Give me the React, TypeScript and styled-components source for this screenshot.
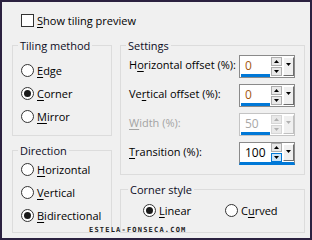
import React from "react";
import styled, { createGlobalStyle } from "styled-components";

const GlobalStyle = createGlobalStyle`
  html, body {
    margin: 0;
    padding: 0;
    background: #f0f0f0;
  }
  body {
    font-family: "Open Sans", "Noto Sans", sans-serif;
    font-size: 11px;
    color: #000;
  }
`;

const Window = styled.div`
  position: relative;
  box-sizing: border-box;
  width: 312px;
  height: 240px;
  border: 2px solid #2b2140;
  background: #f0f0f0;
  padding: 11px 0 0 10px;
`;

const CheckRow = styled.label`
  display: flex;
  align-items: center;
  gap: 3px;
  height: 15px;
  margin-left: 9px;
`;

const CheckBox = styled.span`
  box-sizing: border-box;
  width: 13px;
  height: 13px;
  border: 1px solid #333;
  background: #fff;
`;

const Columns = styled.div`
  display: flex;
  gap: 8px;
  margin-top: 17px;
`;

const Column = styled.div<{ $width: number }>`
  display: flex;
  flex-direction: column;
  gap: 14px;
  width: ${(p) => p.$width}px;
`;

const Group = styled.div<{ $height: number }>`
  box-sizing: border-box;
  height: ${(p) => p.$height}px;
  border: 1px solid #dcdcdc;
`;

const Caption = styled.div<{ $indent?: number }>`
  width: fit-content;
  margin: -8px 0 0 ${(p) => p.$indent ?? 5}px;
  padding: 0 2px;
  line-height: 15px;
  background: #f0f0f0;
  color: #0c0c24;
`;

const RadioList = styled.div<{ $top: number }>`
  display: flex;
  flex-direction: column;
  padding: ${(p) => p.$top}px 0 0 8px;
`;

const RadioRow = styled.label`
  display: flex;
  align-items: center;
  gap: 3px;
  height: 23px;
`;

const RadioCircle = styled.span<{ $on?: boolean }>`
  box-sizing: border-box;
  display: flex;
  align-items: center;
  justify-content: center;
  width: 13px;
  height: 13px;
  border: 1px solid #333;
  border-radius: 50%;
  background: #fff;

  &::after {
    content: "";
    display: ${(p) => (p.$on ? "block" : "none")};
    width: 7px;
    height: 7px;
    border-radius: 50%;
    background: #1a1a1a;
  }
`;

const Key = styled.u`
  text-decoration: underline;
  text-underline-offset: 2px;
`;

const SettingsBody = styled.div`
  display: flex;
  flex-direction: column;
  padding: 2px 9px 0 8px;
`;

const SettingRow = styled.div`
  display: flex;
  justify-content: space-between;
  align-items: flex-start;
  height: 29px;
`;

const SettingLabel = styled.span<{ $disabled?: boolean }>`
  margin-top: 2px;
  line-height: 15px;
  color: ${(p) => (p.$disabled ? "#a3a3a3" : "#000")};
`;

const Spin = styled.div<{ $disabled?: boolean; $focused?: boolean }>`
  box-sizing: border-box;
  display: flex;
  width: 56px;
  height: 23px;
  border: 1px solid ${(p) => (p.$disabled ? "#c4c4c4" : "#8a8a8a")};
  background: #fff;
  border-bottom-width: ${(p) => (p.$focused ? 3 : 1)}px;
  border-bottom-color: ${(p) => (p.$focused ? "#0078d7" : p.$disabled ? "#c4c4c4" : "#8a8a8a")};
`;

const Edit = styled.div<{ $color: string; $focused?: boolean }>`
  box-sizing: border-box;
  display: flex;
  align-items: center;
  width: 30px;
  margin: 0 1px;
  padding-left: 4px;
  color: ${(p) => p.$color};
  font-size: 12px;
  border-bottom: ${(p) => (p.$focused ? "0" : "3px solid #0078d7")};
`;

const Spinner = styled.div`
  display: flex;
  flex-direction: column;
  justify-content: center;
  gap: 1px;
  width: 11px;
  margin-right: 1px;
`;

const SpinButton = styled.div<{ $disabled?: boolean; $hot?: boolean }>`
  box-sizing: border-box;
  display: flex;
  align-items: center;
  justify-content: center;
  height: 9px;
  border: 1px solid ${(p) => (p.$hot ? "#0078d7" : p.$disabled ? "#d6d6d6" : "#adadad")};
  background: ${(p) => (p.$hot ? "#cce4f7" : "#e9e9e9")};
`;

const DropButton = styled.div<{ $disabled?: boolean }>`
  box-sizing: border-box;
  display: flex;
  justify-content: center;
  padding-top: 5px;
  width: 11px;
  margin: 1px 0;
  background: #f0f0f0;
  border-top: 1px solid #fff;
  border-left: 1px solid #fff;
  border-right: 1px solid ${(p) => (p.$disabled ? "#c0c0c0" : "#6d6d6d")};
  border-bottom: 1px solid ${(p) => (p.$disabled ? "#c0c0c0" : "#6d6d6d")};
`;

const CornerOptions = styled.div`
  display: grid;
  grid-template-columns: 82px auto;
  padding: 2px 0 0 22px;
`;

const Watermark = styled.div`
  position: absolute;
  left: 87px;
  top: 224px;
  font-family: "DejaVu Sans Mono", monospace;
  font-weight: bold;
  font-size: 7px;
  letter-spacing: 1.2px;
  color: #1e1e1e;
`;

const Arrow = ({ dir, color }: { dir: "up" | "down"; color: string }) => (
  <svg width="5" height="3" viewBox="0 0 5 3">
    <polygon points={dir === "up" ? "2.5,0 5,3 0,3" : "0,0 5,0 2.5,3"} fill={color} />
  </svg>
);

type SettingProps = {
  label: React.ReactNode;
  value: string;
  color: string;
  disabled?: boolean;
  focused?: boolean;
};

const Setting = ({ label, value, color, disabled, focused }: SettingProps) => {
  const ink = disabled ? "#b0b0b0" : "#000";
  return (
    <SettingRow>
      <SettingLabel $disabled={disabled}>{label}</SettingLabel>
      <Spin $disabled={disabled} $focused={focused}>
        <Edit $color={color} $focused={focused}>
          {value}
        </Edit>
        <Spinner>
          <SpinButton $disabled={disabled}>
            <Arrow dir="up" color={ink} />
          </SpinButton>
          <SpinButton $disabled={disabled} $hot={focused}>
            <Arrow dir="down" color={ink} />
          </SpinButton>
        </Spinner>
        <DropButton $disabled={disabled}>
          <Arrow dir="down" color={ink} />
        </DropButton>
      </Spin>
    </SettingRow>
  );
};

const Radio = ({ on, children }: { on?: boolean; children: React.ReactNode }) => (
  <RadioRow>
    <RadioCircle $on={on} />
    <span>{children}</span>
  </RadioRow>
);

const App = () => {
  return (
    <>
      <GlobalStyle />
      <Window>
        <CheckRow>
          <CheckBox />
          <span>
            <Key>S</Key>how tiling preview
          </span>
        </CheckRow>
        <Columns>
          <Column $width={100}>
            <Group $height={91}>
              <Caption>Tiling method</Caption>
              <RadioList $top={6}>
                <Radio>
                  <Key>E</Key>dge
                </Radio>
                <Radio on>
                  <Key>C</Key>orner
                </Radio>
                <Radio>
                  <Key>M</Key>irror
                </Radio>
              </RadioList>
            </Group>
            <Group $height={83}>
              <Caption>Direction</Caption>
              <RadioList $top={0}>
                <Radio>
                  <Key>H</Key>orizontal
                </Radio>
                <Radio>
                  <Key>V</Key>ertical
                </Radio>
                <Radio on>
                  <Key>B</Key>idirectional
                </Radio>
              </RadioList>
            </Group>
          </Column>
          <Column $width={185}>
            <Group $height={130}>
              <Caption>Settings</Caption>
              <SettingsBody>
                <Setting
                  label={
                    <>
                      H<Key>o</Key>rizontal offset (%):
                    </>
                  }
                  value="0"
                  color="#a4560e"
                />
                <Setting
                  label={
                    <>
                      Ve<Key>r</Key>tical offset (%):
                    </>
                  }
                  value="0"
                  color="#a4560e"
                />
                <Setting
                  label={
                    <>
                      <Key>W</Key>idth (%):
                    </>
                  }
                  value="50"
                  color="#a8a8a8"
                  disabled
                />
                <Setting
                  label={
                    <>
                      <Key>T</Key>ransition (%):
                    </>
                  }
                  value="100"
                  color="#000"
                  focused
                />
              </SettingsBody>
            </Group>
            <Group $height={44}>
              <Caption $indent={7}>Corner style</Caption>
              <CornerOptions>
                <Radio on>
                  <Key>L</Key>inear
                </Radio>
                <Radio>
                  C<Key>u</Key>rved
                </Radio>
              </CornerOptions>
            </Group>
          </Column>
        </Columns>
        <Watermark>ESTELA-FONSECA.COM</Watermark>
      </Window>
    </>
  );
};

export default App;
